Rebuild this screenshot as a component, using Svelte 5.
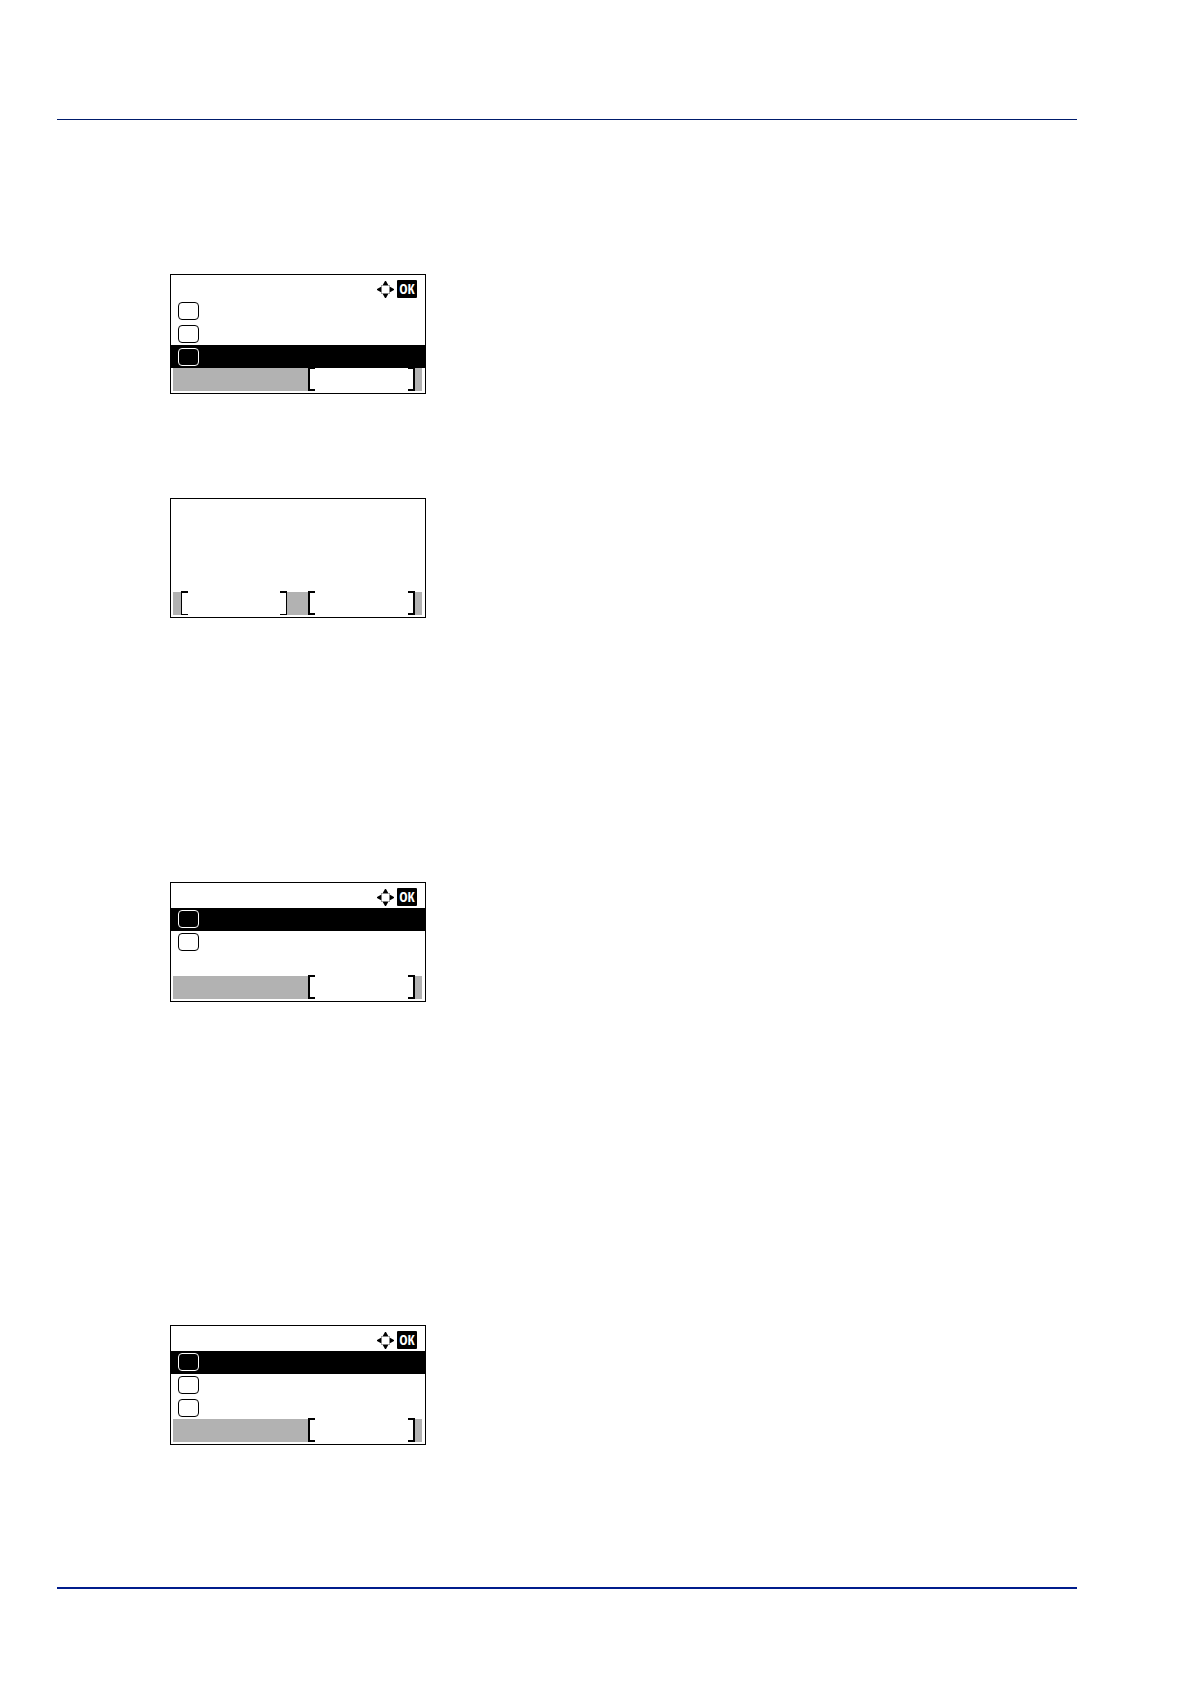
<script lang="ts">
	interface Screen {
		rows: number;
		selected: number;
		leftKey: boolean;
	}

	// LCD message panels, top to bottom. A screen with no rows has no header hint.
	const screens: Screen[] = [
		{ rows: 3, selected: 2, leftKey: false },
		{ rows: 0, selected: -1, leftKey: true },
		{ rows: 2, selected: 0, leftKey: false },
		{ rows: 3, selected: 0, leftKey: false }
	];
</script>

<main>
	<hr class="rule-top" />

	<div class="screens">
		{#each screens as screen}
			<section class="lcd">
				<header>
					{#if screen.rows > 0}
						<svg class="arrows" viewBox="0 0 17 17" aria-hidden="true">
							<path d="M8 0H9L11.5 4.5H5.5ZM8 17H9L11.5 12.5H5.5ZM0 8V9L4.5 11.5V5.5ZM17 8V9L12.5 11.5V5.5Z" />
							<path class="ring" d="M4.5 5.5V4.5H5.5M11.5 4.5H12.5V5.5M12.5 11.5V12.5H11.5M5.5 12.5H4.5V11.5" />
						</svg>
						<span class="ok">OK</span>
					{/if}
				</header>

				<ul>
					{#each { length: screen.rows } as _, i}
						<li class:selected={i === screen.selected}><span class="number"></span></li>
					{/each}
				</ul>

				<footer>
					{#if screen.leftKey}
						<button type="button" class="left" aria-label="Left select"></button>
					{/if}
					<button type="button" class="right" aria-label="Right select"></button>
				</footer>
			</section>
		{/each}
	</div>

	<hr class="rule-bottom" />
</main>

<style>
	:global(body) {
		margin: 0;
		background: #fff;
	}

	main {
		padding: 119px 113px 95px 57px;
	}

	hr {
		margin: 0;
		border: 0;
	}

	.rule-top {
		height: 1px;
		background: #001c6c;
	}

	.rule-bottom {
		height: 2px;
		background: #001c8c;
	}

	.screens {
		display: flex;
		flex-direction: column;
		padding: 154px 0 142px 113px;
	}

	.lcd {
		display: flex;
		flex-direction: column;
		box-sizing: border-box;
		width: 256px;
		height: 120px;
		border: 1px solid #000;
	}

	.lcd:nth-child(2) {
		margin-top: 104px;
	}

	.lcd:nth-child(3) {
		margin-top: 264px;
	}

	.lcd:nth-child(4) {
		margin-top: 323px;
	}

	header {
		display: flex;
		justify-content: flex-end;
		align-items: center;
		gap: 3px;
		height: 25px;
		padding: 3px 8px 0 0;
		box-sizing: border-box;
	}

	.arrows {
		width: 17px;
		height: 17px;
	}

	.ring {
		fill: none;
		stroke: #777;
		stroke-width: 1;
	}

	.ok {
		width: 20px;
		height: 18px;
		border-radius: 1px;
		background: #000;
		color: #fff;
		font: bold 14px/18px 'Open Sans Condensed', 'Liberation Sans Narrow', 'Liberation Sans', sans-serif;
		text-align: center;
	}

	ul {
		display: grid;
		grid-template-rows: repeat(3, 1fr);
		flex: 1;
		margin: 0;
		padding: 0;
		list-style: none;
	}

	li {
		display: flex;
		align-items: center;
		padding-left: 7px;
	}

	.number {
		box-sizing: border-box;
		width: 21px;
		height: 18px;
		border: 1px solid #000;
		border-radius: 4px;
	}

	.selected {
		background: #000;
	}

	.selected .number {
		border-color: #fff;
	}

	footer {
		display: flex;
		height: 23px;
		margin: 0 3px 2px 2px;
		padding: 0 7px 0 8px;
		background: #b2b2b2;
	}

	/* Soft key: white face with square brackets at both ends */
	button {
		display: flex;
		justify-content: space-between;
		width: 107px;
		padding: 0;
		border: 0;
		border-radius: 0;
		background: #fff;
	}

	button::before,
	button::after {
		content: '';
		box-sizing: border-box;
		width: 7px;
		height: 24px;
		margin-top: -1px;
		border: 2px solid #000;
	}

	button::before {
		border-right: 0;
	}

	button::after {
		border-left: 0;
	}

	/* The left key has a lighter bracket than the right one */
	.left {
		width: 106px;
	}

	.left::before,
	.left::after {
		border-width: 2px 1px 1px;
	}

	.right {
		margin-left: auto;
	}
</style>
